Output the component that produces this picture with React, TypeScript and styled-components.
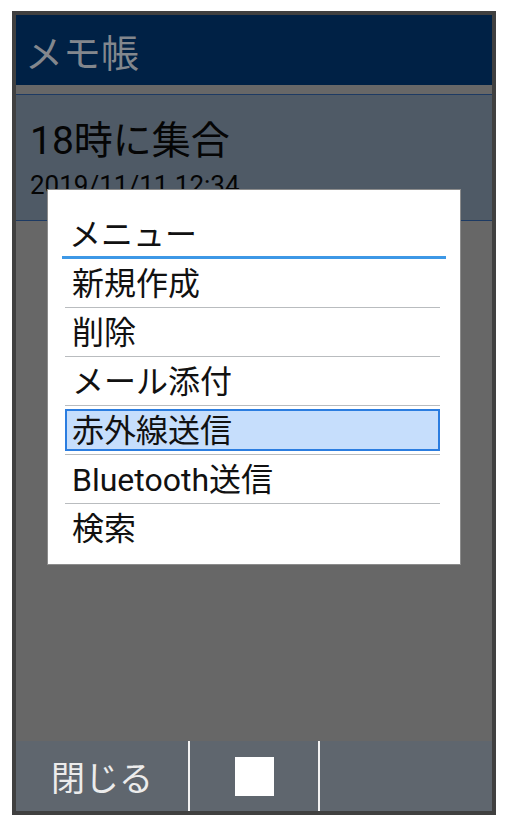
import styled, { createGlobalStyle } from "styled-components";

const GlobalStyle = createGlobalStyle`
  html, body {
    margin: 0;
    padding: 0;
    background: #ffffff;
  }
  body {
    font-family: Roboto, "Noto Sans CJK JP", sans-serif;
  }
  * {
    box-sizing: border-box;
  }
`;

const Frame = styled.div`
  margin: 11px 0 0 12px;
  width: 484px;
  height: 804px;
  border: 4px solid #404040;
  background: #676767;
`;

const Screen = styled.div`
  position: relative;
  height: 100%;
  display: flex;
  flex-direction: column;
`;

const Header = styled.div`
  height: 70px;
  background: #002145;
  display: flex;
  align-items: center;
  padding-left: 9px;
  color: #83878d;
  font-size: 38px;
`;

const Band = styled.div`
  height: 9px;
  background: #676767;
`;

const MemoItem = styled.div`
  height: 127px;
  background: #4f5a66;
  border-top: 1px solid #1d3a63;
  border-bottom: 1px solid #1d3a63;
  padding: 23px 0 0 14px;
  color: #050505;
`;

const MemoTitle = styled.div`
  font-size: 39px;
  line-height: 46px;
`;

const MemoDate = styled.div`
  font-size: 26px;
  line-height: 30px;
  margin-top: 6px;
`;

const Dimmed = styled.div`
  flex: 1;
  background: #676767;
`;

const BottomBar = styled.div`
  height: 70px;
  background: #5f666e;
  display: grid;
  grid-template-columns: 174px 130px 1fr;
`;

const SoftKey = styled.div<{ $divider?: boolean }>`
  display: flex;
  align-items: center;
  justify-content: center;
  color: #ececec;
  font-size: 34px;
  border-right: ${(p) => (p.$divider ? "2px solid #f2f2f2" : "none")};
`;

const StopMark = styled.div`
  width: 39px;
  height: 39px;
  background: #ffffff;
`;

const Dialog = styled.div`
  position: absolute;
  top: 174px;
  left: 31px;
  width: 414px;
  background: #ffffff;
  border: 1px solid #8c8c8c;
  padding: 25px 14px 12px;
  color: #111111;
`;

const DialogTitle = styled.div`
  height: 44px;
  line-height: 41px;
  font-size: 32px;
  padding-left: 7px;
  border-bottom: 3px solid #3d98e6;
`;

const MenuList = styled.ul`
  list-style: none;
  margin: 0 6px 0 3px;
  padding: 0;
`;

const MenuItem = styled.li`
  height: 49px;
  font-size: 32px;
  border-bottom: 1px solid #b9bcbf;
  padding: 3px 0;
  &:last-child {
    border-bottom: none;
    height: 48px;
  }
`;

const MenuLabel = styled.div<{ $selected?: boolean }>`
  height: 42px;
  line-height: 40px;
  padding-left: 5px;
  background: ${(p) => (p.$selected ? "#c6defc" : "transparent")};
  border: 2px solid ${(p) => (p.$selected ? "#2b7de0" : "transparent")};
`;

const menuItems = [
  "新規作成",
  "削除",
  "メール添付",
  "赤外線送信",
  "Bluetooth送信",
  "検索",
];

export default function App() {
  return (
    <>
      <GlobalStyle />
      <Frame>
        <Screen>
          <Header>メモ帳</Header>
          <Band />
          <MemoItem>
            <MemoTitle>18時に集合</MemoTitle>
            <MemoDate>2019/11/11 12:34</MemoDate>
          </MemoItem>
          <Dimmed />
          <BottomBar>
            <SoftKey $divider>閉じる</SoftKey>
            <SoftKey $divider>
              <StopMark />
            </SoftKey>
            <SoftKey />
          </BottomBar>
          <Dialog>
            <DialogTitle>メニュー</DialogTitle>
            <MenuList>
              {menuItems.map((item) => (
                <MenuItem key={item}>
                  <MenuLabel $selected={item === "赤外線送信"}>{item}</MenuLabel>
                </MenuItem>
              ))}
            </MenuList>
          </Dialog>
        </Screen>
      </Frame>
    </>
  );
}
